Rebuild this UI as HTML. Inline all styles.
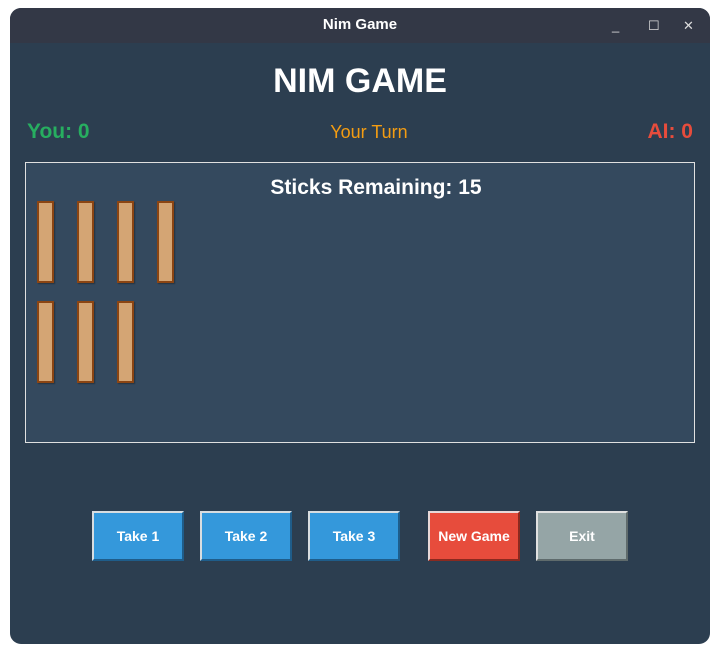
<!DOCTYPE html>
<html><head><style>
body{margin:0;width:720px;height:655px;background:#fff;position:relative;overflow:hidden;font-family:"Liberation Sans",sans-serif}
.win{position:absolute;left:10px;top:8px;width:700px;height:636px;border-radius:11px;background:#2c3e50;overflow:hidden}
.tb{position:absolute;left:0;top:0;width:700px;height:35px;background:#333846;color:#fff;font-family:"Liberation Sans",sans-serif;font-weight:bold;font-size:15px;text-align:center;line-height:34px}
.ctl{position:absolute;top:0;color:#ddd;font-size:13px;font-weight:normal;line-height:36px}
.t{position:absolute;white-space:nowrap}
.panel{position:absolute;left:15px;top:154px;width:668px;height:279px;border:1px solid #e0e0e0;background:#34495e}
.s{position:absolute;width:13px;height:78px;background:#d4a574;border:2px solid #8b4513;box-shadow:1px 1px 1px rgba(0,0,0,.3)}
.b{position:absolute;top:503px;width:88px;height:46px;border:2px solid;border-color:#d8dde0 #1f5d8a #1f5d8a #d8dde0;color:#fff;font-weight:bold;font-size:14px;text-align:center;line-height:46px;background:#3498db}
</style></head><body>
<div class="win">
<div class="tb">Nim Game<span class="ctl" style="left:602px">_</span><span class="ctl" style="left:638px">☐</span><span class="ctl" style="left:673px">✕</span></div>
<div class="t" style="left:0;width:700px;text-align:center;top:54px;font-size:34px;font-weight:bold;color:#fff">NIM GAME</div>
<div class="t" style="left:17px;top:112px;font-size:21px;font-weight:bold;color:#27ae60">You: 0</div>
<div class="t" style="left:0;width:718px;text-align:center;top:114px;font-size:18px;color:#f39c12">Your Turn</div>
<div class="t" style="right:17px;top:112px;font-size:21px;font-weight:bold;color:#e74c3c">AI: 0</div>
<div class="panel">
<div class="t" style="left:0;width:700px;text-align:center;top:13px;font-size:21px;font-weight:bold;color:#fff">Sticks Remaining: 15</div>
<div class="s" style="left:11px;top:38px"></div><div class="s" style="left:51px;top:38px"></div><div class="s" style="left:91px;top:38px"></div><div class="s" style="left:131px;top:38px"></div>
<div class="s" style="left:11px;top:138px"></div><div class="s" style="left:51px;top:138px"></div><div class="s" style="left:91px;top:138px"></div>
</div>
<div class="b" style="left:82px">Take 1</div>
<div class="b" style="left:190px">Take 2</div>
<div class="b" style="left:298px">Take 3</div>
<div class="b" style="left:418px;background:#e74c3c;border-color:#e8d8d8 #8a2a20 #8a2a20 #e8d8d8">New Game</div>
<div class="b" style="left:526px;background:#95a5a6;border-color:#e0e0e0 #5f6b6c #5f6b6c #e0e0e0">Exit</div>
</div>
</body></html>
